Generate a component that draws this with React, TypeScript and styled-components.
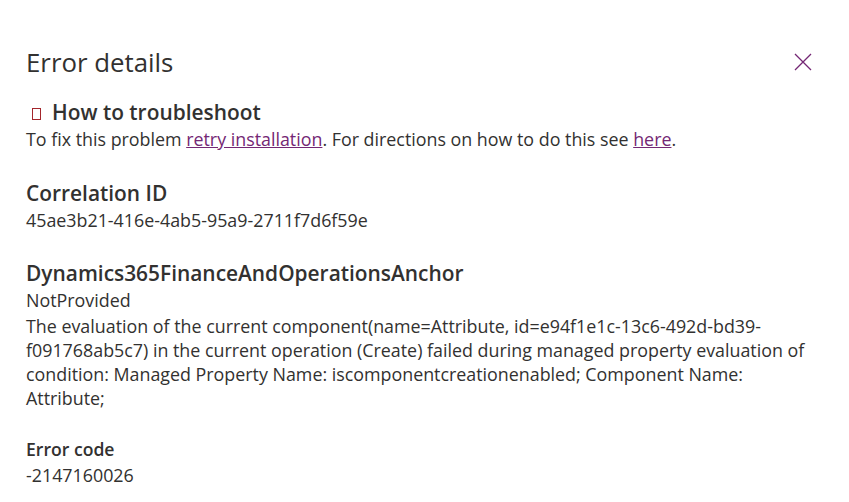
import React from "react";
import styled, { createGlobalStyle } from "styled-components";

const Global = createGlobalStyle`
  html, body { margin: 0; padding: 0; background: #ffffff; }
  body { font-family: "Open Sans", "Noto Sans", sans-serif; color: #323130; }
`;

const Panel = styled.div`
  padding: 46px 26px 0 26px;
  width: 849px;
  box-sizing: border-box;
`;

const Header = styled.div`
  display: flex;
  align-items: center;
  justify-content: space-between;
  height: 32px;
`;

const Title = styled.h1`
  margin: 0;
  font-size: 25.8px;
  line-height: 32px;
  font-weight: 400;
  color: #323130;
`;

const CloseButton = styled.button`
  border: none;
  background: transparent;
  padding: 0;
  width: 20px;
  height: 20px;
  margin-right: 10px;
  display: flex;
  align-items: center;
  justify-content: center;
  cursor: pointer;
`;

const Section = styled.section<{ $gap: number }>`
  margin-top: ${(p) => p.$gap}px;
`;

const Heading = styled.h2<{ $small?: boolean }>`
  margin: 0;
  font-size: ${(p) => (p.$small ? 17.6 : 20.9)}px;
  line-height: ${(p) => (p.$small ? 24 : 28)}px;
  font-weight: 600;
  color: #323130;
  display: flex;
  align-items: center;
`;

const Tofu = styled.span`
  display: inline-block;
  width: 7px;
  height: 10px;
  border: 1px solid #a4262c;
  margin: 3px 11px 0 6px;
`;

const Text = styled.p<{ $gap?: number }>`
  margin: ${(p) => p.$gap ?? 0}px 0 0 0;
  font-size: 17.85px;
  line-height: 24px;
  color: #323130;
`;

const Link = styled.a`
  color: #742774;
  text-decoration: underline;
`;

export default function App() {
  return (
    <>
      <Global />
      <Panel>
        <Header>
          <Title>Error details</Title>
          <CloseButton aria-label="Close">
            <svg width="18" height="18" viewBox="0 0 18 18">
              <path d="M1 1 L17 17 M17 1 L1 17" stroke="#742774" strokeWidth="1.3" fill="none" />
            </svg>
          </CloseButton>
        </Header>

        <Section $gap={20}>
          <Heading>
            <Tofu />
            How to troubleshoot
          </Heading>
          <Text $gap={1}>
            To fix this problem <Link href="#">retry installation</Link>. For directions on how to do this see{" "}
            <Link href="#">here</Link>.
          </Text>
        </Section>

        <Section $gap={28}>
          <Heading>Correlation ID</Heading>
          <Text $gap={1}>45ae3b21-416e-4ab5-95a9-2711f7d6f59e</Text>
        </Section>

        <Section $gap={27}>
          <Heading>Dynamics365FinanceAndOperationsAnchor</Heading>
          <Text $gap={1}>NotProvided</Text>
          <Text $gap={2}>
            The evaluation of the current component(name=Attribute, id=e94f1e1c-13c6-492d-bd39-f091768ab5c7) in the
            current operation (Create) failed during managed property evaluation of condition: Managed Property Name:
            iscomponentcreationenabled; Component Name: Attribute;
          </Text>
        </Section>

        <Section $gap={27}>
          <Heading $small>Error code</Heading>
          <Text $gap={2}>-2147160026</Text>
        </Section>
      </Panel>
    </>
  );
}
